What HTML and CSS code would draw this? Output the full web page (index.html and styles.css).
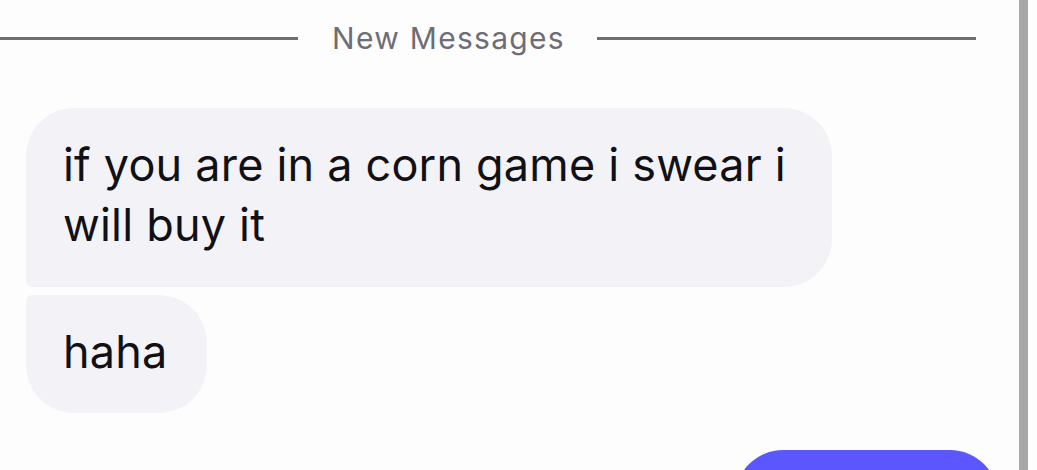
FILE: index.html
```html
<!DOCTYPE html>
<html lang="en">
<head>
<meta charset="utf-8">
<title>Messages</title>
<link rel="stylesheet" href="styles.css">
</head>
<body>
<div class="screen">
  <main class="thread">
    <div class="divider">
      <span class="divider-line"></span>
      <span class="divider-label">New Messages</span>
      <span class="divider-line"></span>
    </div>
    <div class="group incoming">
      <div class="bubble first">if you are in a corn game i swear i will buy it</div>
      <div class="bubble last">haha</div>
    </div>
    <div class="group outgoing">
      <div class="bubble sent"></div>
    </div>
  </main>
  <div class="scrollbar"></div>
</div>
</body>
</html>
```

FILE: styles.css
```css
html, body {
  margin: 0;
  padding: 0;
  background: #fefdfe;
  height: 100%;
  overflow: hidden;
}

.screen {
  display: flex;
  height: 470px;
  padding-right: 9px;
  font-family: Inter, "Noto Sans", sans-serif;
}

.thread {
  flex: 1;
  display: flex;
  flex-direction: column;
  padding-top: 20px;
  overflow: hidden;
}

.scrollbar {
  width: 9px;
  background: #a8a6a9;
}

.divider {
  display: flex;
  align-items: center;
  height: 36px;
  padding-right: 43px;
}

.divider-line {
  height: 3px;
  background: #6f6e73;
}

.divider-line:first-child {
  width: 298px;
}

.divider-line:last-child {
  flex: 1;
}

.divider-label {
  margin: 0 32px 0 34px;
  font-size: 30px;
  line-height: 36px;
  letter-spacing: 1.3px;
  color: #6e6d75;
  white-space: nowrap;
}

.group {
  display: flex;
  flex-direction: column;
  gap: 8px;
}

.incoming {
  margin-top: 52px;
  padding-left: 26px;
  align-items: flex-start;
}

.bubble {
  background: #f3f2f7;
  color: #101015;
  font-size: 45px;
  line-height: 60px;
  letter-spacing: 0.2px;
  padding: 27px 37px 32px 37px;
  border-radius: 48px;
  max-width: 806px;
  box-sizing: border-box;
}

.bubble.first {
  border-bottom-left-radius: 6px;
}

.bubble.last {
  border-top-left-radius: 6px;
  padding: 27px 39px 31px 37px;
}

.outgoing {
  margin-top: 37px;
  padding-right: 21px;
  align-items: flex-end;
}

.bubble.sent {
  background: #5b56fd;
  width: 263px;
  height: 118px;
  padding: 0;
}
```
